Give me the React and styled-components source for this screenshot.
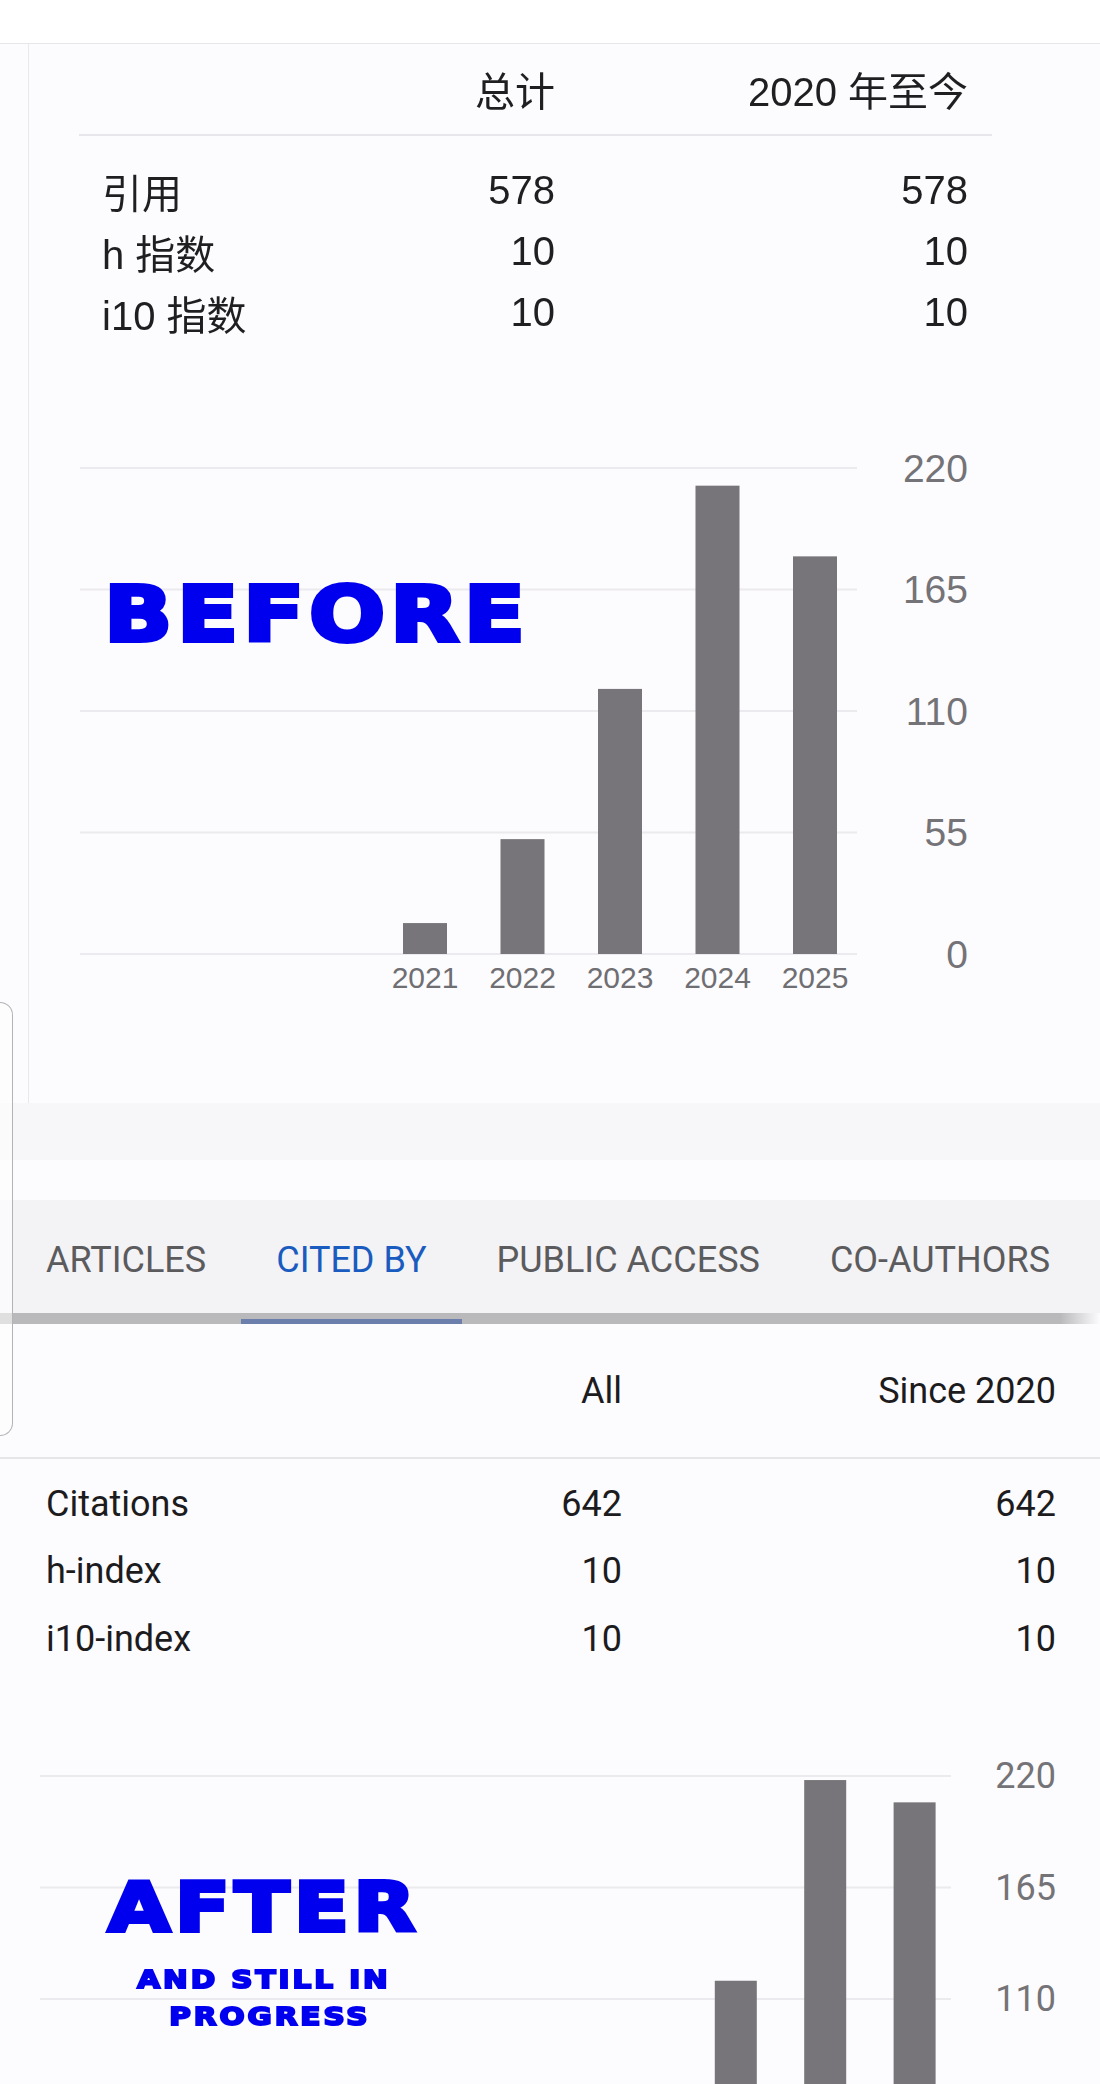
import styled, { createGlobalStyle } from "styled-components";

const GlobalStyle = createGlobalStyle`
  html, body {
    margin: 0;
    padding: 0;
    background: #fcfbfd;
    overflow: hidden;
  }
  body {
    width: 1100px;
    height: 2084px;
  }
`;

const TICKS = [220, 165, 110, 55, 0];

const zhStats = [
    { label: "引用", all: 578, since: 578 },
    { label: "h 指数", all: 10, since: 10 },
    { label: "i10 指数", all: 10, since: 10 },
];

const enStats = [
    { label: "Citations", all: 642, since: 642 },
    { label: "h-index", all: 10, since: 10 },
    { label: "i10-index", all: 10, since: 10 },
];

const beforeData = [
    { year: 2021, value: 14 },
    { year: 2022, value: 52 },
    { year: 2023, value: 120 },
    { year: 2024, value: 212 },
    { year: 2025, value: 180 },
];

const afterData = [
    { year: 2021, value: 14 },
    { year: 2022, value: 60 },
    { year: 2023, value: 119 },
    { year: 2024, value: 218 },
    { year: 2025, value: 207 },
];

// chart geometry, in svg units
const beforeChart = {
    width: 1071, height: 760,
    top: 125, base: 611,
    x1: 51, x2: 828,
    labelX: 939,
    firstBar: 396, pitch: 97.5, barW: 44,
    yearY: 634,
    font: `"Liberation Sans", Arial, sans-serif`,
    axisSize: 39, yearSize: 30,
};

// the lower chart runs past the bottom of the page, so it is cut to what fits
const afterChart = {
    width: 1100, height: 412,
    top: 103, base: 549,
    x1: 40, x2: 951,
    labelX: 1056,
    firstBar: 557, pitch: 89.4, barW: 42,
    yearY: 574,
    font: `Roboto, "Liberation Sans", sans-serif`,
    axisSize: 36, yearSize: 30,
};

const tabs = ["ARTICLES", "CITED BY", "PUBLIC ACCESS", "CO-AUTHORS"];

function BarChart({ cfg, data }) {
    const step = (cfg.base - cfg.top) / 4;
    const unit = (cfg.base - cfg.top) / 220;
    const fits = (y, size) => y + size / 2 < cfg.height;

    return (
        <ChartSvg
            width={cfg.width}
            height={cfg.height}
            $font={cfg.font}
            $axisSize={cfg.axisSize}
            $yearSize={cfg.yearSize}
        >
            {TICKS.map((t, i) => {
                const y = cfg.top + i * step;
                return (
                    <g key={t}>
                        {y < cfg.height && <line x1={cfg.x1} x2={cfg.x2} y1={y} y2={y} />}
                        {fits(y, cfg.axisSize) && (
                            <text className="tick" x={cfg.labelX} y={y} textAnchor="end" dominantBaseline="central">
                                {t}
                            </text>
                        )}
                    </g>
                );
            })}
            {data.map((d, i) => {
                const cx = cfg.firstBar + i * cfg.pitch;
                const h = d.value * unit;
                return (
                    <g key={d.year}>
                        <rect x={cx - cfg.barW / 2} y={cfg.base - h} width={cfg.barW} height={h} />
                        {fits(cfg.yearY, cfg.yearSize) && (
                            <text className="year" x={cx} y={cfg.yearY} textAnchor="middle" dominantBaseline="central">
                                {d.year}
                            </text>
                        )}
                    </g>
                );
            })}
        </ChartSvg>
    );
}

export default function App() {
    return (
        <Page>
            <GlobalStyle />
            <TopStrip />

            <Card>
                <ZhTable>
                    <ZhRow $head>
                        <span />
                        <Num>总计</Num>
                        <Num>2020 年至今</Num>
                    </ZhRow>
                    <ZhBody>
                        {zhStats.map((s) => (
                            <ZhRow key={s.label}>
                                <span>{s.label}</span>
                                <Num>{s.all}</Num>
                                <Num>{s.since}</Num>
                            </ZhRow>
                        ))}
                    </ZhBody>
                </ZhTable>

                <ChartBox $height={760}>
                    <BarChart cfg={beforeChart} data={beforeData} />
                    <BeforeStamp>BEFORE</BeforeStamp>
                </ChartBox>
            </Card>

            <Band />

            <TabBar>
                {tabs.map((t) => (
                    <Tab key={t} $active={t === "CITED BY"}>{t}</Tab>
                ))}
            </TabBar>
            <Track />

            <EnRow $head>
                <span />
                <Num>All</Num>
                <Num>Since 2020</Num>
            </EnRow>
            <EnBody>
                {enStats.map((s) => (
                    <EnRow key={s.label}>
                        <span>{s.label}</span>
                        <Num>{s.all}</Num>
                        <Num>{s.since}</Num>
                    </EnRow>
                ))}
            </EnBody>

            <ChartBox $height={412}>
                <BarChart cfg={afterChart} data={afterData} />
                <AfterStamp>
                    <Big>AFTER</Big>
                    <Small>AND STILL IN</Small>
                    <Small $shift>PROGRESS</Small>
                </AfterStamp>
            </ChartBox>

            <SideHandle />
        </Page>
    );
}

const Page = styled.div`
    position: relative;
    width: 1100px;
    height: 2084px;
    overflow: hidden;
    background: #fcfbfd;
`;

const TopStrip = styled.div`
    height: 43px;
    background: #ffffff;
    border-bottom: 1px solid #e6e5ea;
`;

const Card = styled.section`
    margin-left: 28px;
    border-left: 1px solid #e9e8ee;
    background: #fcfbfd;
`;

const ZhTable = styled.div`
    width: 913px;
    margin-left: 50px;
    font-family: "Liberation Sans", "Noto Sans CJK SC", sans-serif;
    font-size: 40px;
    color: #1f1f21;
    filter: blur(0.4px);
`;

const ZhRow = styled.div`
    display: grid;
    grid-template-columns: 1fr 200px 413px;
    align-items: center;
    padding: 0 24px 0 23px;
    height: ${(p) => (p.$head ? "90px" : "61px")};
    border-bottom: ${(p) => (p.$head ? "2px solid #e7e6eb" : "none")};
`;

const ZhBody = styled.div`
    padding-top: 24px;
`;

const Num = styled.span`
    text-align: right;
`;

const ChartBox = styled.div`
    position: relative;
    height: ${(p) => p.$height}px;
`;

const ChartSvg = styled.svg`
    display: block;
    line {
        stroke: #ebeaee;
        stroke-width: 2;
    }
    rect {
        fill: #777579;
    }
    text {
        font-family: ${(p) => p.$font};
    }
    .tick {
        font-size: ${(p) => p.$axisSize}px;
        fill: #747377;
    }
    .year {
        font-size: ${(p) => p.$yearSize}px;
        fill: #6f6e72;
    }
`;

// heavy, wide caption lettering laid over the charts
const stampText = `
    font-family: "DejaVu Sans", sans-serif;
    font-weight: 700;
    color: #0000ee;
    white-space: nowrap;
`;

const BeforeStamp = styled.div`
    ${stampText}
    position: absolute;
    left: 75px;
    top: 234px;
    font-size: 76px;
    line-height: 76px;
    letter-spacing: 4px;
    -webkit-text-stroke: 4px #0000ee;
    transform: scaleX(1.18);
    transform-origin: left center;
`;

const AfterStamp = styled.div`
    position: absolute;
    left: 84px;
    top: 201px;
    width: 360px;
    display: flex;
    flex-direction: column;
    align-items: center;
    transform: scaleX(1.18);
    transform-origin: center;
`;

const Big = styled.div`
    ${stampText}
    font-size: 68px;
    line-height: 68px;
    letter-spacing: 4px;
    -webkit-text-stroke: 4px #0000ee;
    margin-bottom: 19px;
`;

const Small = styled.div`
    ${stampText}
    -webkit-text-stroke: 2px #0000ee;
    font-size: 25px;
    line-height: 37px;
    letter-spacing: 2.5px;
    margin-left: ${(p) => (p.$shift ? "10px" : "0")};
`;

const Band = styled.div`
    height: 97px;
    background: linear-gradient(#f7f6f9 0, #f7f6f9 57px, #fcfbfd 57px);
`;

const TabBar = styled.nav`
    display: flex;
    align-items: stretch;
    height: 113px;
    padding-left: 11px;
    background: #f3f2f5;
`;

const Tab = styled.div`
    position: relative;
    display: flex;
    align-items: center;
    padding: 6px 35px 0;
    font-family: Roboto, "Liberation Sans", sans-serif;
    font-size: 36px;
    color: ${(p) => (p.$active ? "#1a5bbf" : "#5b5b5e")};
    white-space: nowrap;

    &::after {
        content: "";
        display: ${(p) => (p.$active ? "block" : "none")};
        position: absolute;
        left: 0;
        right: 0;
        bottom: -11px;
        height: 5px;
        background: #6c7eac;
        z-index: 1;
    }
`;

const Track = styled.div`
    height: 11px;
    background: linear-gradient(to right, #b9b8bb 0, #b9b8bb calc(100% - 40px), rgba(185, 184, 187, 0) 100%);
`;

const EnRow = styled.div`
    display: grid;
    grid-template-columns: 1fr 300px 434px;
    align-items: center;
    padding: 0 44px 0 46px;
    height: ${(p) => (p.$head ? "133px" : "67.5px")};
    border-bottom: ${(p) => (p.$head ? "2px solid #e6e5e8" : "none")};
    font-family: Roboto, "Liberation Sans", sans-serif;
    font-size: 36px;
    color: #1c1c1e;
`;

const EnBody = styled.div`
    padding-top: 11px;
`;

const SideHandle = styled.div`
    position: absolute;
    left: 0;
    top: 1002px;
    width: 12px;
    height: 432px;
    border: 1.5px solid #b3b2b6;
    border-left: none;
    border-radius: 0 14px 14px 0;
    background: rgba(255, 255, 255, 0.55);
`;
